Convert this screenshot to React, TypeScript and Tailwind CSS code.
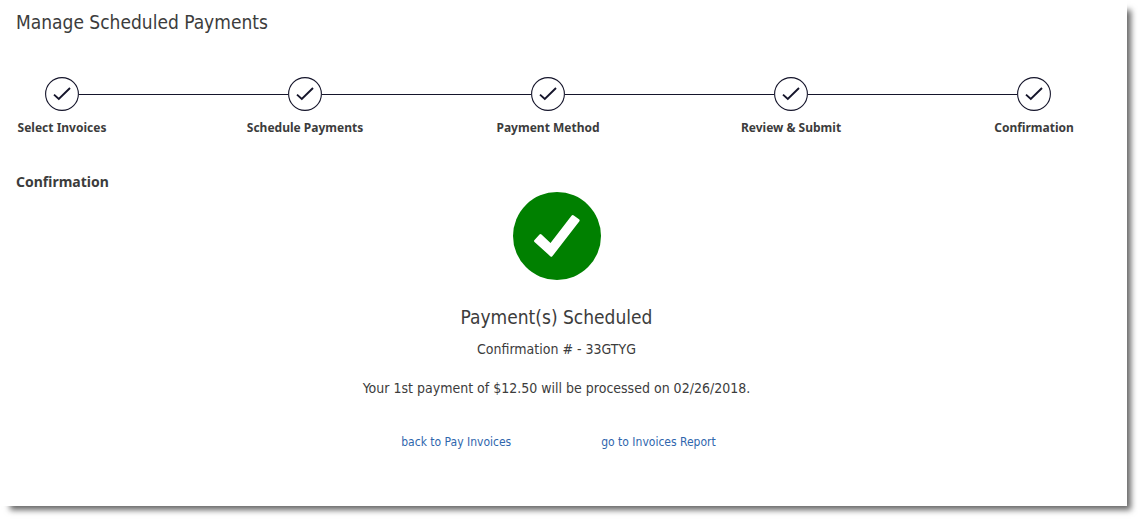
const steps = [
  "Select Invoices",
  "Schedule Payments",
  "Payment Method",
  "Review & Submit",
  "Confirmation",
];

function StepCircle() {
  return (
    <svg
      viewBox="0 0 34 34"
      className="size-[34px] shrink-0"
      fill="none"
      stroke="#15152b"
      aria-hidden="true"
    >
      <circle cx="17" cy="17" r="16.4" strokeWidth="1.1" />
      <path d="M9 17.6 L13.8 22 L25 11" strokeWidth="1.9" />
    </svg>
  );
}

function Stepper() {
  return (
    <ol className="mt-[41px] mr-[46px] ml-[29px] flex">
      {steps.map((label, i) => {
        const last = i === steps.length - 1;
        return (
          <li key={label} className={last ? "flex-none" : "flex-1"}>
            <div className="flex items-center">
              <StepCircle />
              {!last && <span className="h-px flex-1 bg-[#15152b]" />}
            </div>
            <div className="mt-[9px] flex w-[34px] justify-center font-['Noto_Sans',sans-serif] text-xs leading-4 font-bold whitespace-nowrap">
              {label}
            </div>
          </li>
        );
      })}
    </ol>
  );
}

function SuccessMark() {
  return (
    <svg viewBox="0 0 88 88" className="size-[88px]" aria-hidden="true">
      <circle cx="44" cy="44" r="44" fill="#008000" />
      <path
        d="M21.5 48 L26.5 42.5 Q27.5 41.5 28.5 42.5 L37.5 51 L58.5 23.8 Q59.5 22.5 60.8 23.4 L66 27.3 Q67.2 28.3 66.2 29.6 L39.3 64.3 Q38.5 65.3 37.5 64.4 L21.5 50 Q20.5 49 21.5 48 Z"
        fill="#fff"
      />
    </svg>
  );
}

export default function App() {
  return (
    <div className="bg-white pr-[15px] pb-[15px] font-['DejaVu_Sans_Condensed','Noto_Sans',sans-serif] text-[#3c3c3c]">
      <div className="bg-white pt-2 pr-[30px] pb-14 pl-4 shadow-[7px_7px_6px_-3px_rgba(0,0,0,0.6)]">
        <h1 className="text-[19px] leading-7">Manage Scheduled Payments</h1>
        <Stepper />
        <h2 className="mt-9 font-['Noto_Sans',sans-serif] text-sm leading-5 font-bold">
          Confirmation
        </h2>
        <section className="flex flex-col items-center text-sm leading-5">
          <SuccessMark />
          <h3 className="mt-[23px] text-[19px] leading-7">
            Payment(s) Scheduled
          </h3>
          <p className="mt-2">Confirmation # - 33GTYG</p>
          <p className="mt-[19px]">
            Your 1st payment of $12.50 will be processed on 02/26/2018.
          </p>
          <nav className="mt-9 flex gap-[90px] pl-1 text-xs leading-4 text-[#2f66ad]">
            <a href="#pay-invoices">back to Pay Invoices</a>
            <a href="#invoices-report">go to Invoices Report</a>
          </nav>
        </section>
      </div>
    </div>
  );
}
